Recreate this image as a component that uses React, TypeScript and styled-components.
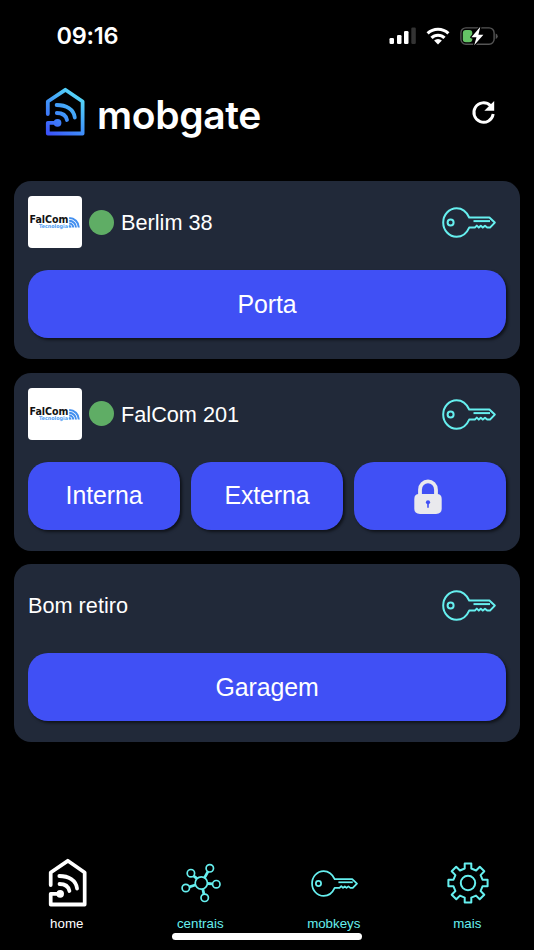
import React from 'react';
import styled, { createGlobalStyle } from 'styled-components';

const GlobalStyle = createGlobalStyle`
  * { box-sizing: border-box; }
  body { margin: 0; background: #000; }
`;

const CYAN = '#66efef';

const Screen = styled.div`
  display: flex;
  flex-direction: column;
  width: 534px;
  height: 950px;
  background: #000;
  color: #fff;
  font-family: 'Liberation Sans', Arial, sans-serif;
  overflow: hidden;
`;

const StatusBar = styled.header`
  display: flex;
  justify-content: space-between;
  align-items: center;
  height: 72px;
  padding: 0 36px 0 56.5px;
`;

const Clock = styled.span`
  font: 600 23.5px/28px Inter, sans-serif;
  letter-spacing: -0.25px;
`;

const StatusIcons = styled.div`
  display: flex;
  align-items: center;
  gap: 10px;
  svg { display: block; }
`;

const TopBar = styled.div`
  display: flex;
  justify-content: space-between;
  height: 109px;
  padding: 14px 37px 0 44px;
`;

const Brand = styled.div`
  display: flex;
  gap: 11px;
  svg { display: block; }
`;

const BrandName = styled.h1`
  margin: 7px 0 0;
  font: 600 39px/44px Inter, sans-serif;
  letter-spacing: -0.35px;
`;

const IconButton = styled.button`
  display: flex;
  align-self: flex-start;
  margin-top: 12px;
  padding: 0;
  border: 0;
  background: none;
  color: #fff;
`;

const CardList = styled.main`
  display: flex;
  flex: 1;
  flex-direction: column;
  gap: 13.7px;
  padding: 0 14px;
`;

const Card = styled.section`
  display: flex;
  flex-direction: column;
  height: 178px;
  padding: 14px 14px 0;
  border-radius: 17px;
  background: #212939;
`;

const CardHeader = styled.div`
  display: flex;
  align-items: center;
  height: 54px;
  margin-bottom: 21px;
  padding-right: 10px;
`;

const CardTitle = styled.h2`
  flex: 1;
  margin: 0;
  padding-top: 2px;
  font-size: 21.7px;
  font-weight: 400;
  line-height: 28px;
`;

const KeySlot = styled.span`
  display: flex;
  padding-top: 1px;
`;

const Vendor = styled.div`
  display: flex;
  align-items: center;
  justify-content: center;
  width: 54px;
  height: 52px;
  border-radius: 4px;
  background: #fff;
  svg { display: block; }
`;

const OnlineDot = styled.span`
  width: 25px;
  height: 25px;
  margin: 0 7px 0 7px;
  border-radius: 50%;
  background: #5fad65;
`;

const Actions = styled.div`
  display: flex;
  gap: 11px;
`;

const ActionButton = styled.button`
  display: flex;
  flex: 1 1 0;
  align-items: center;
  justify-content: center;
  height: 68px;
  padding: 0 0 1px;
  border: 0;
  border-radius: 20px;
  background: #4050f5;
  box-shadow: 2px 2px 3px rgba(0, 0, 0, 0.55);
  color: #fff;
  font: 400 24.9px/30px 'Liberation Sans', Arial, sans-serif;
  letter-spacing: -0.1px;
`;

const LockSlot = styled.span`
  display: flex;
  padding: 3px 5px 0 0;
`;

const TabBar = styled.nav`
  display: grid;
  grid-template-columns: repeat(4, 1fr);
  height: 75px;
`;

const Tab = styled.a<{ $active?: boolean }>`
  display: flex;
  flex-direction: column;
  align-items: center;
  color: ${(p) => (p.$active ? '#fff' : CYAN)};
  font-size: 13.3px;
  line-height: 16px;
`;

const TabIcon = styled.span<{ $lift?: boolean }>`
  display: flex;
  align-items: center;
  justify-content: center;
  height: 50px;
  margin-bottom: 8px;
  padding: ${(p) => (p.$lift ? '0 0 3px 1px' : '0 0 0 1px')};
`;

const HomeIndicator = styled.div`
  align-self: center;
  width: 190px;
  height: 7px;
  margin-bottom: 10px;
  border-radius: 4px;
  background: #fff;
`;

const House = ({ gradient, width, height }: { gradient?: boolean; width: number; height: number }) => {
  const paint = gradient ? 'url(#brand)' : 'currentColor';
  return (
    <svg width={width} height={height} viewBox="0 0 42 50" preserveAspectRatio="none" fill="none"
      stroke={paint} strokeWidth={gradient ? 3.8 : 3.8} strokeLinecap="round" strokeLinejoin="round">
      <defs>
        <linearGradient id="brand" x1="3" y1="48" x2="39" y2="5" gradientUnits="userSpaceOnUse">
          <stop stopColor="#3b50fa" />
          <stop offset="0.5" stopColor="#419bf9" />
          <stop offset="1" stopColor="#5be7f7" />
        </linearGradient>
      </defs>
      <path d="M3.8 28V15.5L21.3 3.8l17.3 11.7v32H3.8V36.8H12" />
      <path d="M12.6 19c9.5 0 17.2 4.2 18.2 12.5M12.8 27c5.5 0 9.2 2.4 10.2 7" />
      <circle cx="13.5" cy="36.8" r="3.9" fill={paint} stroke="none" />
    </svg>
  );
};

const Key = ({ width, height }: { width: number; height: number }) => (
  <svg width={width} height={height} viewBox="0 0 54 31" preserveAspectRatio="none" fill="none"
    stroke={CYAN} strokeWidth="2" strokeLinejoin="round">
    <path d="M27.2 10.5C24.6 4.8 20 1.2 14.6 1.2 7 1.2 1.2 7.8 1.2 15.5S7 29.8 14.6 29.8c5.5 0 10.2-3.8 12.6-9.2h5.6l2-2 2 2 2-1.8 2 1.8 2.2-1.8 2.2 1.8H48l4.8-5-5.4-5.1z" />
    <path d="M31.5 14.1H48" />
    <circle cx="8.6" cy="15.5" r="3" />
  </svg>
);

const Refresh = () => (
  <svg width="28" height="28" viewBox="0 0 28 28" fill="none">
    <path d="M21.4 7.6A9.7 9.7 0 1 0 24.2 16" stroke="#fff" strokeWidth="2.9" />
    <path d="M25.2 2.9v9.9h-9.9z" fill="#fff" />
  </svg>
);

const Lock = () => (
  <svg width="28" height="36" viewBox="0 0 28 37" preserveAspectRatio="none">
    <path d="M6 18V11a8 8.5 0 0 1 16 0v7" fill="none" stroke="#e9e9ed" strokeWidth="3.8" />
    <path d="M5 15.5h18q4.7 0 4.7 5v10.2q0 5.3-5.7 5.3H6Q.3 36 .3 30.7V20.5q0-5 4.7-5z" fill="#e9e9ed" />
    <path d="M14 23.5v6" stroke="#4050f5" strokeWidth="1.6" />
    <circle cx="14" cy="24" r="2.1" fill="#4050f5" />
  </svg>
);

const Nodes = () => (
  <svg width="40" height="40" viewBox="0 0 40 40" fill="none" stroke={CYAN} strokeWidth="1.7">
    <circle cx="20.3" cy="20" r="6.1" />
    <circle cx="28.8" cy="5.3" r="3.7" />
    <circle cx="9.9" cy="10.2" r="3.7" />
    <circle cx="4.8" cy="25" r="3.7" />
    <circle cx="23.7" cy="34.8" r="3.7" />
    <circle cx="35.3" cy="21.2" r="3.7" />
    <path strokeWidth="2.8" d="M23.5 14.8l3.4-6.2M16.1 15.6l-3.6-2.8M14.3 22l-5.8 1.8M21.8 26l1.1 5M26.5 20.5l5 .4" />
  </svg>
);

const Gear = () => (
  <svg width="42" height="42" viewBox="0 0 42 42" fill="none" stroke={CYAN} strokeWidth="2" strokeLinejoin="round">
    <path d="M17.7 1.4h6.6v5.1l4.8 2 3.7-3.7 4.5 4.5-3.7 3.8 1.9 4.6h5.1v6.6h-5.1l-1.9 4.7 3.7 3.7-4.6 4.6-3.7-3.7-4.7 2v5h-6.6v-5l-4.7-2-3.7 3.7-4.6-4.6L8.4 29l-1.9-4.7H1.4v-6.6h5.1l1.9-4.6-3.7-3.8 4.5-4.5L13 8.5l4.7-2z" />
    <circle cx="21" cy="21" r="7.2" />
  </svg>
);

const SignalIcon = () => (
  <svg width="27" height="18" viewBox="0 0 27 18" fill="#fff">
    <rect x=".5" y="11" width="4.5" height="6" rx="1.3" />
    <rect x="8" y="8" width="4.5" height="9" rx="1.3" />
    <rect x="15" y="4" width="4.5" height="13" rx="1.3" />
    <rect x="22.3" y=".5" width="4.5" height="16.5" rx="1.3" fill="#333" />
  </svg>
);

const WifiIcon = () => (
  <svg width="24" height="18" viewBox="0 0 24 18" fill="none" stroke="#fff" strokeWidth="3.1">
    <path d="M1.6 6.4a15 15 0 0 1 20.8 0M5.5 10.9a9.2 9.2 0 0 1 13 0" />
    <path d="M12 17.5l-3.9-4a5.6 5.6 0 0 1 7.8 0z" fill="#fff" stroke="none" />
  </svg>
);

const BatteryIcon = () => (
  <svg width="38" height="20" viewBox="0 0 38 20">
    <rect x=".9" y="1.9" width="33.2" height="16.4" rx="5" fill="none" stroke="#555" strokeWidth="1.4" />
    <path d="M35.7 7.4q2 .7 2 2.8t-2 2.8z" fill="#555" />
    <rect x="2.8" y="4" width="9.5" height="12.3" rx="3" fill="#65c466" />
    <path d="M20.3.8L11.4 11.2h5.1l-2.3 8L23.4 8.7h-5z" fill="#fff" stroke="#000" strokeWidth="2.4" paintOrder="stroke" strokeLinejoin="round" />
  </svg>
);

const VendorLogo = () => (
  <svg width="54" height="52" viewBox="0 0 54 52">
    <text x="1.5" y="27.4" fontFamily="DejaVu Sans, sans-serif" fontSize="9.7" fontWeight="700" fill="#111" textLength="39" lengthAdjust="spacingAndGlyphs">FalCom</text>
    <text x="11" y="32" fontFamily="DejaVu Sans, sans-serif" fontSize="5.2" fontWeight="700" fill="#4b9bf3" textLength="29" lengthAdjust="spacingAndGlyphs">Tecnologia</text>
    <g fill="none" stroke="#438fef" strokeWidth="2">
      <path d="M41.2 22a9.6 9.6 0 0 1 9.6 9.5M41.2 24.8a6.8 6.8 0 0 1 6.8 6.7M41.2 27.5a4 4 0 0 1 4 4" />
      <path d="M41.2 31.3v-2a2 2 0 0 1 2 2z" fill="#438fef" strokeWidth=".6" />
    </g>
  </svg>
);

type Gate = { name: string; branded?: boolean; actions: string[] };

const gates: Gate[] = [
  { name: 'Berlim 38', branded: true, actions: ['Porta'] },
  { name: 'FalCom 201', branded: true, actions: ['Interna', 'Externa', 'lock'] },
  { name: 'Bom retiro', actions: ['Garagem'] },
];

const GateCard = ({ name, branded, actions }: Gate) => (
  <Card>
    <CardHeader>
      {branded && (
        <>
          <Vendor><VendorLogo /></Vendor>
          <OnlineDot />
        </>
      )}
      <CardTitle>{name}</CardTitle>
      <KeySlot><Key width={54} height={31} /></KeySlot>
    </CardHeader>
    <Actions>
      {actions.map((action) => (
        <ActionButton key={action}>
          {action === 'lock' ? <LockSlot><Lock /></LockSlot> : action}
        </ActionButton>
      ))}
    </Actions>
  </Card>
);

export default function App() {
  return (
    <>
      <GlobalStyle />
      <Screen>
        <StatusBar>
          <Clock>09:16</Clock>
          <StatusIcons>
            <SignalIcon />
            <WifiIcon />
            <BatteryIcon />
          </StatusIcons>
        </StatusBar>
        <TopBar>
          <Brand>
            <House gradient width={42} height={50} />
            <BrandName>mobgate</BrandName>
          </Brand>
          <IconButton aria-label="Atualizar"><Refresh /></IconButton>
        </TopBar>
        <CardList>
          {gates.map((gate) => <GateCard key={gate.name} {...gate} />)}
        </CardList>
        <TabBar>
          <Tab $active><TabIcon $lift><House width={41} height={50} /></TabIcon>home</Tab>
          <Tab><TabIcon><Nodes /></TabIcon>centrais</Tab>
          <Tab><TabIcon><Key width={47} height={27} /></TabIcon>mobkeys</Tab>
          <Tab><TabIcon><Gear /></TabIcon>mais</Tab>
        </TabBar>
        <HomeIndicator />
      </Screen>
    </>
  );
}
